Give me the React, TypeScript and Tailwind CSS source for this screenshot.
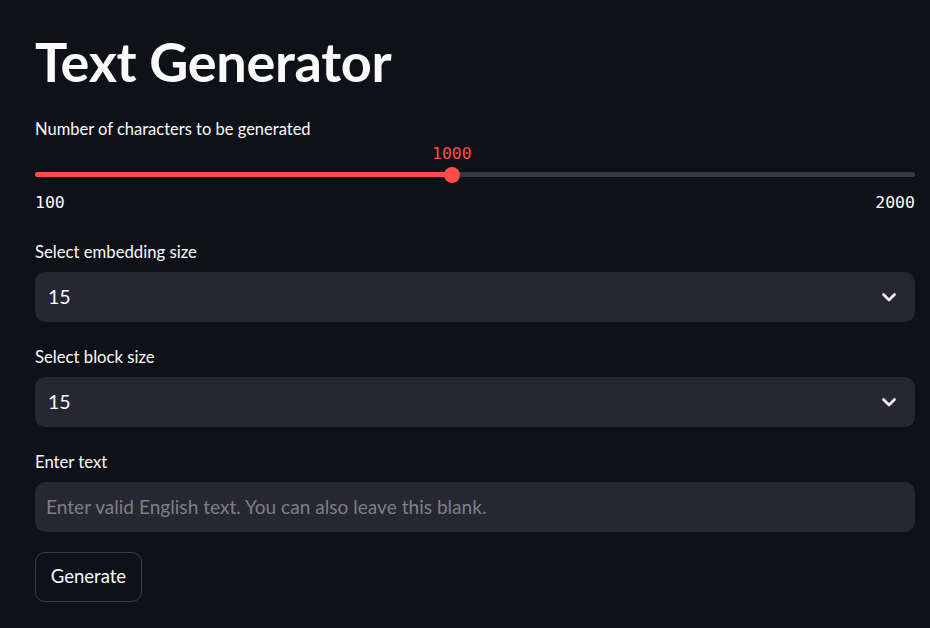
import React from "react";

const sans = { fontFamily: '"Lato", "Noto Sans", sans-serif' };

function Chevron() {
  return (
    <svg width="14" height="9" viewBox="0 0 14 9" fill="none">
      <path d="M1.5 1.5 L7 7 L12.5 1.5" stroke="#fafafa" strokeWidth="2.6" strokeLinecap="round" strokeLinejoin="round" />
    </svg>
  );
}

function Select({ label, value }: { label: string; value: string }) {
  return (
    <>
      <div className="mt-[23px] h-[24px] leading-[24px] text-[16.7px] text-[#fafafa]">{label}</div>
      <div className="mt-[8px] h-[50px] rounded-[10px] bg-[#262730] flex items-center justify-between pl-[13px] pr-[19px]">
        <span className="text-[19.5px] text-[#fafafa]">{value}</span>
        <Chevron />
      </div>
    </>
  );
}

export default function App() {
  const min = 100;
  const max = 2000;
  const val = 1000;
  const pct = ((val - min) / (max - min)) * 100;
  return (
    <div className="min-h-[628px] w-full bg-[#0e1117] px-[35px]" style={sans}>
      <div className="flex flex-col w-[880px]">
        <h1 className="mt-[32px] h-[60px] leading-[60px] text-[54px] font-bold text-[#fafafa] tracking-[-0.3px]">Text Generator</h1>
        <div className="mt-[25px] h-[24px] leading-[24px] text-[16.5px] text-[#fafafa]">Number of characters to be generated</div>
        <div className="relative h-[52px]">
          <div
            className="absolute top-[3px] -translate-x-1/2 text-[16.5px] leading-[20px] text-[#ff4b4b]"
            style={{ left: `${pct}%`, fontFamily: '"DejaVu Sans Mono", monospace' }}
          >
            {val}
          </div>
          <div className="absolute left-0 right-0 top-[31px] h-[5px] rounded-full bg-[#363941]" />
          <div className="absolute left-0 top-[31px] h-[5px] rounded-l-full bg-[#ff4b4b]" style={{ width: `${pct}%` }} />
          <div
            className="absolute top-[25.5px] h-[16px] w-[16px] -translate-x-1/2 rounded-full bg-[#ff4b4b]"
            style={{ left: `${pct}%` }}
          />
        </div>
        <div
          className="h-[20px] leading-[20px] flex justify-between text-[16.5px] text-[#fafafa]"
          style={{ fontFamily: '"DejaVu Sans Mono", monospace' }}
        >
          <span>100</span>
          <span>2000</span>
        </div>
        <div className="mt-[4px]" />
        <Select label="Select embedding size" value="15" />
        <Select label="Select block size" value="15" />
        <div className="mt-[23px] h-[24px] leading-[24px] text-[16.7px] text-[#fafafa]">Enter text</div>
        <div className="mt-[8px] h-[50px] rounded-[10px] bg-[#262730] flex items-center pl-[11px]">
          <span className="text-[19.1px] text-[#7d7f87]">Enter valid English text. You can also leave this blank.</span>
        </div>
        <div className="mt-[20px]">
          <button className="h-[50px] w-[107px] rounded-[10px] border border-[#3b3d44] bg-transparent text-[18.5px] text-[#fafafa]">
            Generate
          </button>
        </div>
      </div>
    </div>
  );
}
